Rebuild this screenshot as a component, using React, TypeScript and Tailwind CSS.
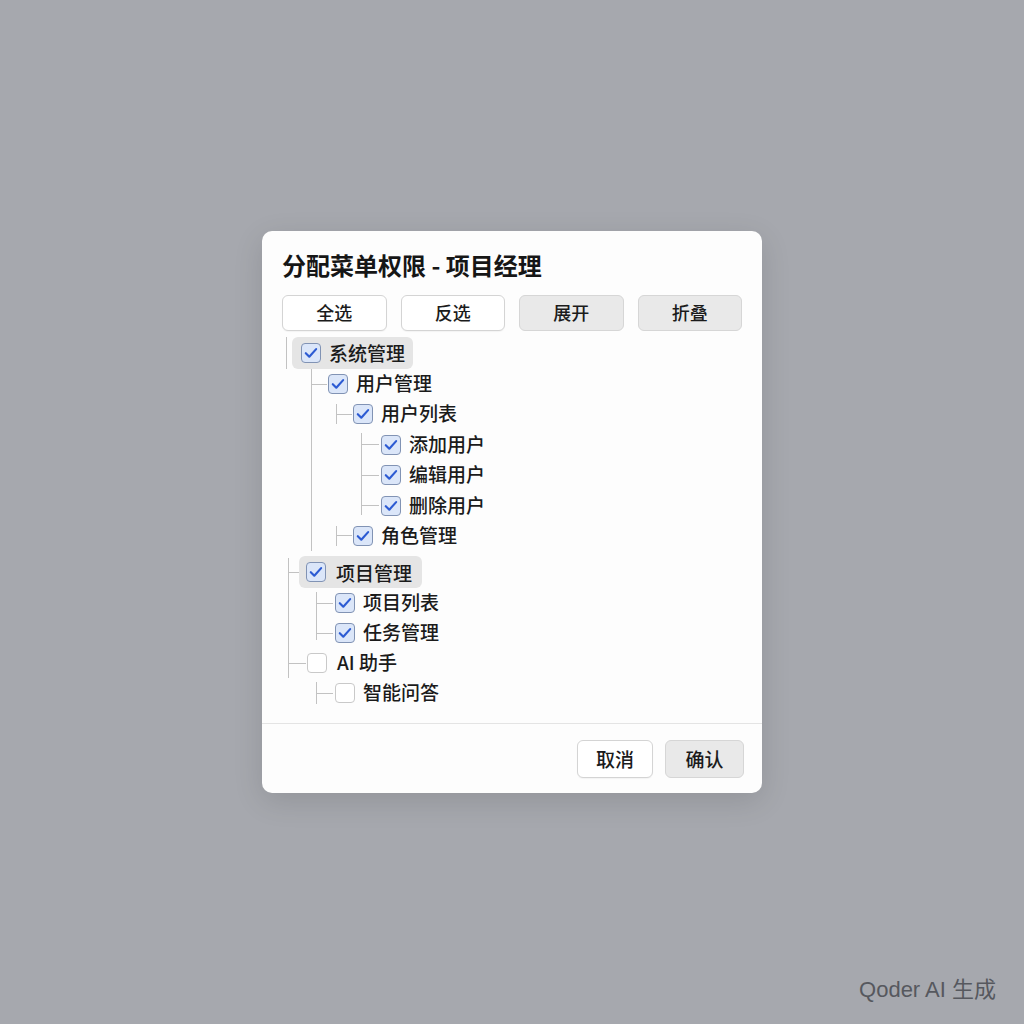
import React from "react";

const font = "font-['Noto_Sans_CJK_SC','Noto_Sans',sans-serif]";

function Box({ checked }: { checked: boolean }) {
  if (!checked) {
    return (
      <span className="block h-[20px] w-[20px] shrink-0 rounded-[4px] border-[1.5px] border-[#c9c9c9] bg-white" />
    );
  }
  return (
    <span className="flex h-[20px] w-[20px] shrink-0 items-center justify-center rounded-[4px] border-[1.5px] border-[#8193b4] bg-[#dbe6f9]">
      <svg viewBox="0 0 20 20" className="h-[18px] w-[18px]" fill="none">
        <path
          d="M4.2 10.2l3.9 3.9 7.6-8.4"
          stroke="#2c5bd3"
          strokeWidth="2.4"
          strokeLinecap="round"
          strokeLinejoin="round"
        />
      </svg>
    </span>
  );
}

function Label({ children }: { children: React.ReactNode }) {
  return <span className="whitespace-nowrap text-[19px] font-medium leading-none text-[#1b1b1b]">{children}</span>;
}

function Btn({ children, filled, className }: { children: React.ReactNode; filled?: boolean; className?: string }) {
  return (
    <button
      className={
        (filled
          ? "border-[#d6d6d6] bg-[#e9e9e9] "
          : "border-[#d4d4d4] bg-white shadow-[0_1px_1px_rgba(0,0,0,0.04)] ") +
        "flex items-center justify-center rounded-[6px] border text-[18px] font-medium text-[#1b1b1b] " +
        (className ?? "")
      }
    >
      {children}
    </button>
  );
}

export default function App() {
  return (
    <div className={`relative flex min-h-screen w-full items-center justify-center bg-[#a6a8ae] ${font}`}>
      <div className="w-[500px] rounded-[10px] bg-[#fdfdfd] shadow-[0_8px_30px_rgba(0,0,0,0.12)]">
        <div className="px-5 pb-[15px] pt-5">
          <h1 className="text-[24px] font-semibold leading-[28px] text-[#161616]">分配菜单权限 - 项目经理</h1>

          <div className="mt-[16px] grid grid-cols-4 gap-[14px]">
            <Btn className="h-[36px]">全选</Btn>
            <Btn className="h-[36px]">反选</Btn>
            <Btn className="h-[36px]" filled>展开</Btn>
            <Btn className="h-[36px]" filled>折叠</Btn>
          </div>

          {/* tree */}
          <div className="mt-[6px]">
            {/* 系统管理 */}
            <div className="flex h-[32px] items-stretch">
              <span className="ml-[4px] w-px bg-[#c2c2c2]" />
              <div className="ml-[5px] flex items-center gap-[8px] rounded-[6px] bg-[#e5e5e5] pl-[9px] pr-[8px]">
                <Box checked />
                <Label>系统管理</Label>
              </div>
            </div>

            {/* 用户管理 */}
            <div className="flex h-[30.4px] items-center">
              <span className="ml-[29px] w-px self-stretch bg-[#c2c2c2]" />
              <span className="h-px w-[15px] bg-[#c2c2c2]" />
              <span className="ml-[1px]"><Box checked /></span>
              <span className="ml-[8px]"><Label>用户管理</Label></span>
            </div>

            {/* 用户列表 */}
            <div className="flex h-[30.4px] items-center">
              <span className="ml-[29px] w-px self-stretch bg-[#c2c2c2]" />
              <span className="ml-[24px] h-[20px] w-px bg-[#c2c2c2]" />
              <span className="h-px w-[15px] bg-[#c2c2c2]" />
              <span className="ml-[1px]"><Box checked /></span>
              <span className="ml-[8px]"><Label>用户列表</Label></span>
            </div>

            {/* 添加 / 编辑 / 删除 */}
            <div className="flex h-[30.4px] items-center">
              <span className="ml-[29px] w-px self-stretch bg-[#c2c2c2]" />
              <span className="ml-[49px] mt-[3px] w-px self-stretch bg-[#c2c2c2]" />
              <span className="h-px w-[17px] bg-[#c2c2c2]" />
              <span className="ml-[2px]"><Box checked /></span>
              <span className="ml-[8px]"><Label>添加用户</Label></span>
            </div>
            <div className="flex h-[30.4px] items-center">
              <span className="ml-[29px] w-px self-stretch bg-[#c2c2c2]" />
              <span className="ml-[49px] w-px self-stretch bg-[#c2c2c2]" />
              <span className="h-px w-[17px] bg-[#c2c2c2]" />
              <span className="ml-[2px]"><Box checked /></span>
              <span className="ml-[8px]"><Label>编辑用户</Label></span>
            </div>
            <div className="flex h-[30.4px] items-center">
              <span className="ml-[29px] w-px self-stretch bg-[#c2c2c2]" />
              <span className="ml-[49px] mb-[6px] w-px self-stretch bg-[#c2c2c2]" />
              <span className="h-px w-[17px] bg-[#c2c2c2]" />
              <span className="ml-[2px]"><Box checked /></span>
              <span className="ml-[8px]"><Label>删除用户</Label></span>
            </div>

            {/* 角色管理 */}
            <div className="flex h-[30.4px] items-center">
              <span className="ml-[29px] w-px self-stretch bg-[#c2c2c2]" />
              <span className="ml-[24px] h-[20px] w-px bg-[#c2c2c2]" />
              <span className="h-px w-[15px] bg-[#c2c2c2]" />
              <span className="ml-[1px]"><Box checked /></span>
              <span className="ml-[8px]"><Label>角色管理</Label></span>
            </div>

            {/* 项目管理 */}
            <div className="mt-[5px] flex h-[32px] items-stretch">
              <span className="ml-[6px] mt-[2px] w-px bg-[#c2c2c2]" />
              <span className="h-px w-[10px] self-center bg-[#c2c2c2]" />
              <div className="flex items-center gap-[10px] rounded-[6px] bg-[#e5e5e5] pl-[7px] pr-[10px]">
                <Box checked />
                <Label>项目管理</Label>
              </div>
            </div>

            {/* 项目列表 / 任务管理 */}
            <div className="flex h-[30px] items-center">
              <span className="ml-[6px] w-px self-stretch bg-[#c2c2c2]" />
              <span className="ml-[27px] mt-[4px] w-px self-stretch bg-[#c2c2c2]" />
              <span className="h-px w-[16px] bg-[#c2c2c2]" />
              <span className="ml-[2px]"><Box checked /></span>
              <span className="ml-[8px]"><Label>项目列表</Label></span>
            </div>
            <div className="flex h-[30px] items-center">
              <span className="ml-[6px] w-px self-stretch bg-[#c2c2c2]" />
              <span className="ml-[27px] mb-[8px] w-px self-stretch bg-[#c2c2c2]" />
              <span className="h-px w-[16px] bg-[#c2c2c2]" />
              <span className="ml-[2px]"><Box checked /></span>
              <span className="ml-[8px]"><Label>任务管理</Label></span>
            </div>

            {/* AI 助手 */}
            <div className="flex h-[30px] items-center">
              <span className="ml-[6px] w-px self-stretch bg-[#c2c2c2]" />
              <span className="h-px w-[17px] bg-[#c2c2c2]" />
              <span className="ml-[1px]"><Box checked={false} /></span>
              <span className="ml-[10px]"><Label>AI 助手</Label></span>
            </div>

            {/* 智能问答 */}
            <div className="flex h-[30px] items-center">
              <span className="ml-[34px] h-[22px] w-px bg-[#c2c2c2]" />
              <span className="h-px w-[16px] bg-[#c2c2c2]" />
              <span className="ml-[2px]"><Box checked={false} /></span>
              <span className="ml-[8px]"><Label>智能问答</Label></span>
            </div>
          </div>
        </div>

        <div className="flex justify-end gap-[12px] border-t border-[#e4e4e4] pb-[15px] pr-[18px] pt-[16px]">
          <Btn className="h-[38px] w-[76px] text-[19px]">取消</Btn>
          <Btn className="h-[38px] w-[79px] text-[19px]" filled>确认</Btn>
        </div>
      </div>

      <div className="absolute bottom-[21px] right-[28px] font-['Liberation_Sans','Noto_Sans_CJK_SC',sans-serif] text-[22px] leading-[26px] text-[#56585e]">
        Qoder AI 生成
      </div>
    </div>
  );
}
